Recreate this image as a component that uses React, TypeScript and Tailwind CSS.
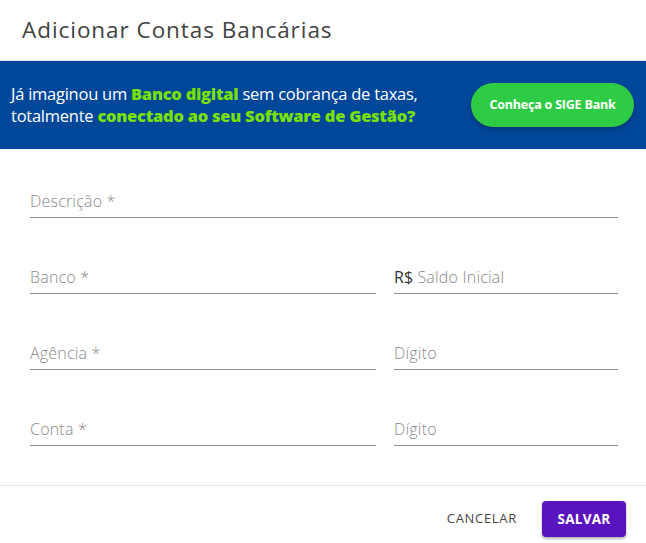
import React from 'react';

const Field: React.FC<{ label: React.ReactNode; className?: string }> = ({ label, className }) => (
  <div className={`flex flex-col ${className ?? ''}`}>
    <div className="h-[28px] flex items-end pb-[8px] text-[16px] font-light text-[#8a8a8a] leading-none tracking-[0.2px]">
      {label}
    </div>
    <div className="h-px bg-[#8e8e8e]" />
  </div>
);

const App: React.FC = () => {
  return (
    <div className="w-[646px] h-[543px] bg-white flex flex-col overflow-hidden" style={{ fontFamily: '"Open Sans", sans-serif' }}>
      <div className="h-[61px] flex items-center px-[22px] border-b border-[#e6e6e6]">
        <h1 className="text-[22.5px] text-[#424242] font-normal leading-none tracking-[0.95px] pt-[1px]">
          Adicionar Contas Bancárias
        </h1>
      </div>

      <div className="h-[88px] bg-[#00479a] flex items-center justify-between pl-[11px] pr-[12px]">
        <p className="text-[16.5px] text-white leading-[22px] tracking-[-0.25px]">
          Já imaginou um <span className="font-extrabold text-[#7ae000]">Banco digital</span> sem cobrança de taxas,
          <br />
          totalmente <span className="font-extrabold text-[#7ae000]">conectado ao seu Software de Gestão?</span>
        </p>
        <button className="w-[163px] h-[44px] rounded-full bg-[#2ecc45] text-white text-[12.5px] font-bold tracking-[-0.2px] shadow-[0_2px_4px_rgba(0,0,0,0.3)]">
          Conheça o SIGE Bank
        </button>
      </div>

      <div className="flex-1 px-[30px] pt-[40px] flex flex-col gap-[47px]">
        <Field label="Descrição *" className="mr-[-2px]" />
        <div className="grid grid-cols-[346px_224px] gap-[18px]">
          <Field label="Banco *" />
          <Field label={<><span className="text-[#333] font-normal">R$</span><span className="ml-[4px]">Saldo Inicial</span></>} />
        </div>
        <div className="grid grid-cols-[346px_224px] gap-[18px]">
          <Field label="Agência *" />
          <Field label="Dígito" />
        </div>
        <div className="grid grid-cols-[346px_224px] gap-[18px]">
          <Field label="Conta *" />
          <Field label="Dígito" />
        </div>
      </div>

      <div className="h-[58px] border-t border-[#e6e6e6] flex items-start pt-[15px] justify-end gap-[25px] pr-[20px]">
        <button className="h-[36px] text-[13px] text-[#444] tracking-[0.7px]">CANCELAR</button>
        <button className="w-[84px] h-[36px] rounded-[4px] bg-[#5a14bf] text-white text-[13.5px] font-bold tracking-[0.3px] shadow-[0_2px_3px_rgba(0,0,0,0.3)]">
          SALVAR
        </button>
      </div>
    </div>
  );
};

export default App;
